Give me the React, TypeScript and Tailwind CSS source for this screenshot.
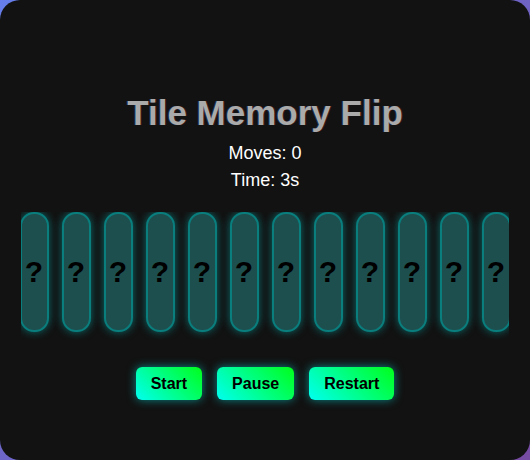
import { useState } from "react";

const TILE_COUNT = 16;

const Tile = () => {
  return (
    <div className="flex h-[120px] w-[29px] shrink-0 items-center justify-center rounded-[14px] border-2 border-[#0a7d7d] bg-[#1e4f4f] text-[30px] font-bold leading-none text-black shadow-[0_0_8px_rgba(0,200,200,0.5)]">
      ?
    </div>
  );
};

const App = () => {
  const [moves] = useState<number>(0);
  const [seconds] = useState<number>(3);

  return (
    <div className="h-[460px] w-[530px] bg-[linear-gradient(135deg,#667eea_0%,#764ba2_100%)] font-['Liberation_Sans',Arial,sans-serif]">
      <div className="flex h-full w-full flex-col items-center rounded-[20px] bg-[#121212] px-[21px] pt-[93px]">
        <h1 className="text-[35px] font-bold leading-[40px] text-[#aaaaaa] [text-shadow:-1px_0_rgba(60,140,255,0.25),1px_0_rgba(255,60,60,0.2)]">
          Tile Memory Flip
        </h1>
        <div className="mt-[7px] text-center text-[18px] leading-[27px] text-white">
          <div>Moves: {moves}</div>
          <div>Time: {seconds}s</div>
        </div>

        {/* Tiles row */}
        <div className="mt-[18px] w-full overflow-hidden pb-[8px]">
          <div className="flex justify-center gap-[13px]">
            {Array.from({ length: TILE_COUNT }, (_, index) => (
              <Tile key={index} />
            ))}
          </div>
        </div>

        {/* Controls */}
        <div className="mt-[27px] flex gap-[15px]">
          {["Start", "Pause", "Restart"].map((label) => (
            <button
              key={label}
              className="h-[33px] rounded-[6px] bg-[linear-gradient(45deg,#00fff0,#00ff1a)] px-[15px] text-[16px] font-bold text-black shadow-[0_0_10px_rgba(0,230,230,0.55)]"
            >
              {label}
            </button>
          ))}
        </div>
      </div>
    </div>
  );
};

export default App;
